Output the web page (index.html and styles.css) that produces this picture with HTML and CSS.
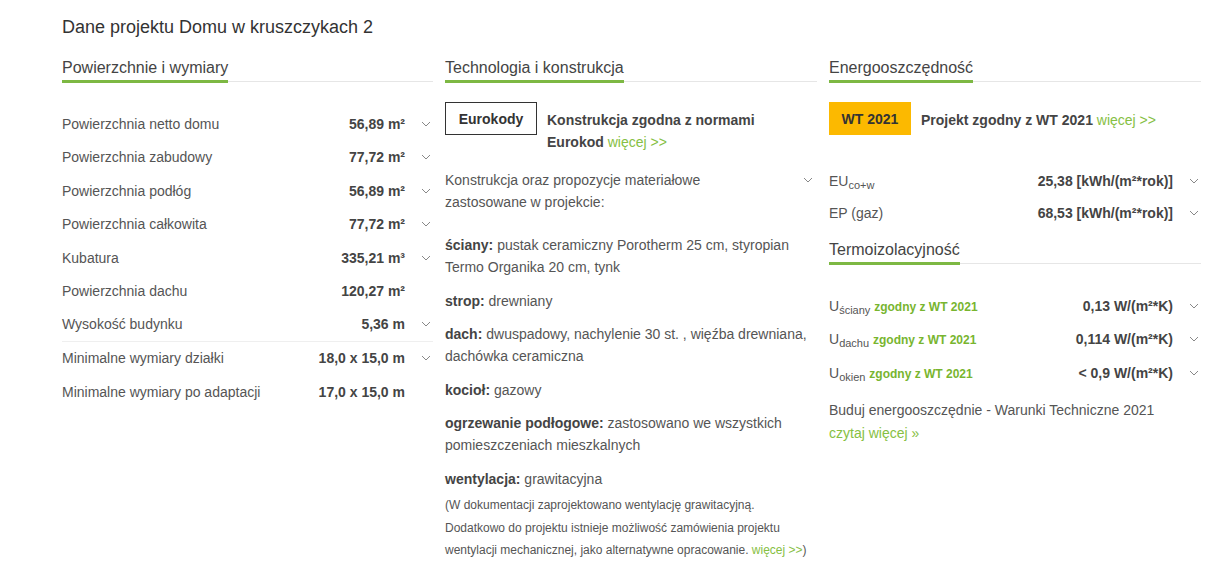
FILE: index.html
```html
<!DOCTYPE html>
<html lang="pl">
<head>
    <meta charset="UTF-8">
    <title>Dane projektu Domu w kruszczykach 2</title>
    <link rel="stylesheet" href="styles.css">
</head>
<body>
    <div class="container">
        <h2 class="title">Dane projektu Domu w kruszczykach 2</h2>

        <div class="columns">
            <!-- Powierzchnie -->
            <div class="col">
                <div class="section-head"><span>Powierzchnie i wymiary</span></div>
                <ul class="rows rows-left">
                    <li class="row"><span class="label">Powierzchnia netto domu</span><span class="value">56,89 m²</span><span class="chev"><svg width="10" height="6" viewBox="0 0 10 6"><polyline points="1,1 5,5 9,1"/></svg></span></li>
                    <li class="row"><span class="label">Powierzchnia zabudowy</span><span class="value">77,72 m²</span><span class="chev"><svg width="10" height="6" viewBox="0 0 10 6"><polyline points="1,1 5,5 9,1"/></svg></span></li>
                    <li class="row"><span class="label">Powierzchnia podłóg</span><span class="value">56,89 m²</span><span class="chev"><svg width="10" height="6" viewBox="0 0 10 6"><polyline points="1,1 5,5 9,1"/></svg></span></li>
                    <li class="row"><span class="label">Powierzchnia całkowita</span><span class="value">77,72 m²</span><span class="chev"><svg width="10" height="6" viewBox="0 0 10 6"><polyline points="1,1 5,5 9,1"/></svg></span></li>
                    <li class="row"><span class="label">Kubatura</span><span class="value">335,21 m³</span><span class="chev"><svg width="10" height="6" viewBox="0 0 10 6"><polyline points="1,1 5,5 9,1"/></svg></span></li>
                    <li class="row"><span class="label">Powierzchnia dachu</span><span class="value">120,27 m²</span><span class="chev"></span></li>
                    <li class="row line"><span class="label">Wysokość budynku</span><span class="value">5,36 m</span><span class="chev"><svg width="10" height="6" viewBox="0 0 10 6"><polyline points="1,1 5,5 9,1"/></svg></span></li>
                    <li class="row"><span class="label">Minimalne wymiary działki</span><span class="value">18,0 x 15,0 m</span><span class="chev"><svg width="10" height="6" viewBox="0 0 10 6"><polyline points="1,1 5,5 9,1"/></svg></span></li>
                    <li class="row"><span class="label">Minimalne wymiary po adaptacji</span><span class="value">17,0 x 15,0 m</span><span class="chev"></span></li>
                </ul>
            </div>

            <!-- Technologia -->
            <div class="col">
                <div class="section-head"><span>Technologia i konstrukcja</span></div>
                <div class="badge-row">
                    <div class="badge badge-outline">Eurokody</div>
                    <div class="badge-text badge-text-narrow">Konstrukcja zgodna z normami Eurokod <a href="#" class="more">więcej &gt;&gt;</a></div>
                </div>

                <div class="materials-head">
                    <span>Konstrukcja oraz propozycje materiałowe zastosowane w projekcie:</span>
                    <span class="chev"><svg width="10" height="6" viewBox="0 0 10 6"><polyline points="1,1 5,5 9,1"/></svg></span>
                </div>

                <div class="materials">
                    <p class="item"><b>ściany:</b> pustak ceramiczny Porotherm 25 cm, styropian Termo Organika 20 cm, tynk</p>
                    <p class="item"><b>strop:</b> drewniany</p>
                    <p class="item"><b>dach:</b> dwuspadowy, nachylenie 30 st. , więźba drewniana, dachówka ceramiczna</p>
                    <p class="item"><b>kocioł:</b> gazowy</p>
                    <p class="item"><b>ogrzewanie podłogowe:</b> zastosowano we wszystkich pomieszczeniach mieszkalnych</p>
                    <p class="item"><b>wentylacja:</b> grawitacyjna</p>
                    <p class="note">(W dokumentacji zaprojektowano wentylację grawitacyjną. Dodatkowo do projektu istnieje możliwość zamówienia projektu wentylacji mechanicznej, jako alternatywne opracowanie. <a href="#" class="more">więcej &gt;&gt;</a>)</p>
                </div>
            </div>

            <!-- Energooszczednosc -->
            <div class="col">
                <div class="section-head"><span>Energooszczędność</span></div>
                <div class="badge-row">
                    <div class="badge badge-wt">WT 2021</div>
                    <div class="badge-text">Projekt zgodny z WT 2021 <a href="#" class="more">więcej &gt;&gt;</a></div>
                </div>

                <ul class="rows rows-energy">
                    <li class="row"><span class="label">EU<sub>co+w</sub></span><span class="value">25,38 [kWh/(m²*rok)]</span><span class="chev"><svg width="10" height="6" viewBox="0 0 10 6"><polyline points="1,1 5,5 9,1"/></svg></span></li>
                    <li class="row"><span class="label">EP (gaz)</span><span class="value">68,53 [kWh/(m²*rok)]</span><span class="chev"><svg width="10" height="6" viewBox="0 0 10 6"><polyline points="1,1 5,5 9,1"/></svg></span></li>
                </ul>

                <div class="section-head section-head-sub"><span>Termoizolacyjność</span></div>
                <ul class="rows rows-u">
                    <li class="row"><span class="label">U<sub>ściany</sub> <em class="ok">zgodny z WT 2021</em></span><span class="value">0,13 W/(m²*K)</span><span class="chev"><svg width="10" height="6" viewBox="0 0 10 6"><polyline points="1,1 5,5 9,1"/></svg></span></li>
                    <li class="row"><span class="label">U<sub>dachu</sub> <em class="ok">zgodny z WT 2021</em></span><span class="value">0,114 W/(m²*K)</span><span class="chev"><svg width="10" height="6" viewBox="0 0 10 6"><polyline points="1,1 5,5 9,1"/></svg></span></li>
                    <li class="row"><span class="label">U<sub>okien</sub> <em class="ok">zgodny z WT 2021</em></span><span class="value">&lt; 0,9 W/(m²*K)</span><span class="chev"><svg width="10" height="6" viewBox="0 0 10 6"><polyline points="1,1 5,5 9,1"/></svg></span></li>
                </ul>

                <p class="read-more">Buduj energooszczędnie - Warunki Techniczne 2021<br><a href="#" class="more">czytaj więcej »</a></p>
            </div>
        </div>
    </div>
</body>
</html>
```

FILE: styles.css
```css
* {
    margin: 0;
    padding: 0;
    box-sizing: border-box;
}

body {
    font-family: 'Liberation Sans', Arial, sans-serif;
    font-size: 14px;
    color: #555;
    background: #fff;
}

a {
    text-decoration: none;
}

.container {
    width: 1138px;
    margin-left: 62px;
    padding-top: 16px;
}

.title {
    font-size: 18px;
    font-weight: 400;
    line-height: 22px;
    color: #333;
    margin-bottom: 20px;
}

.columns {
    display: grid;
    grid-template-columns: 371px 372px 372px;
    gap: 12px;
}

/* naglowki sekcji */
.section-head {
    border-bottom: 1px solid #e6e6e6;
    font-size: 16px;
    line-height: 20px;
    color: #444;
}

.section-head span {
    display: inline-block;
    padding-bottom: 2px;
    border-bottom: 3px solid #7db843;
    margin-bottom: -2px;
}

.section-head-sub {
    margin-top: 11px;
}

/* wiersze z wartosciami */
.rows {
    list-style: none;
}

.row {
    display: flex;
    align-items: center;
    height: 33.5px;
}

.row.line {
    border-bottom: 1px solid #efefef;
}

.rows-left {
    margin-top: 25px;
}

.label {
    flex: 1;
    color: #555;
}

.value {
    font-weight: 700;
    color: #444;
}

.chev {
    width: 28px;
    display: flex;
    justify-content: flex-end;
    padding-right: 2px;
}

.chev svg polyline {
    fill: none;
    stroke: #888;
    stroke-width: 1;
}

sub {
    font-size: 11px;
    vertical-align: -3px;
    line-height: 0;
}

.more {
    color: #86c043;
    font-weight: 400;
}

.ok {
    font-style: normal;
    font-weight: 700;
    font-size: 12px;
    color: #78b52f;
}

/* odznaki */
.badge-row {
    display: flex;
    align-items: flex-start;
    gap: 10px;
    margin-top: 20px;
}

.badge {
    flex: none;
    height: 33px;
    display: flex;
    align-items: center;
    justify-content: center;
    font-weight: 700;
    color: #333;
}

.badge-outline {
    width: 92px;
    border: 1px solid #333;
}

.badge-wt {
    width: 82px;
    background: #fcb900;
}

.badge-text {
    padding-top: 7px;
    line-height: 22px;
    font-weight: 700;
    color: #444;
}

.badge-text-narrow {
    max-width: 230px;
}

/* technologia */
.materials-head {
    display: flex;
    align-items: flex-start;
    margin-top: 16px;
    line-height: 22px;
}

.materials-head span:first-child {
    flex: 1;
    padding-right: 70px;
}

.materials-head .chev {
    padding-top: 8px;
    padding-right: 4px;
}

.materials {
    margin-top: 21px;
}

.item {
    line-height: 22px;
    margin-bottom: 11.5px;
    padding-right: 4px;
}

.item b {
    color: #444;
}

.note {
    font-size: 12px;
    line-height: 22.5px;
    margin-top: -7px;
}

/* energia */
.rows-energy {
    margin-top: 30px;
}

.rows-energy .row {
    height: 32px;
}

.rows-u {
    margin-top: 25px;
}

.read-more {
    margin-top: 9px;
    line-height: 23px;
}
```
